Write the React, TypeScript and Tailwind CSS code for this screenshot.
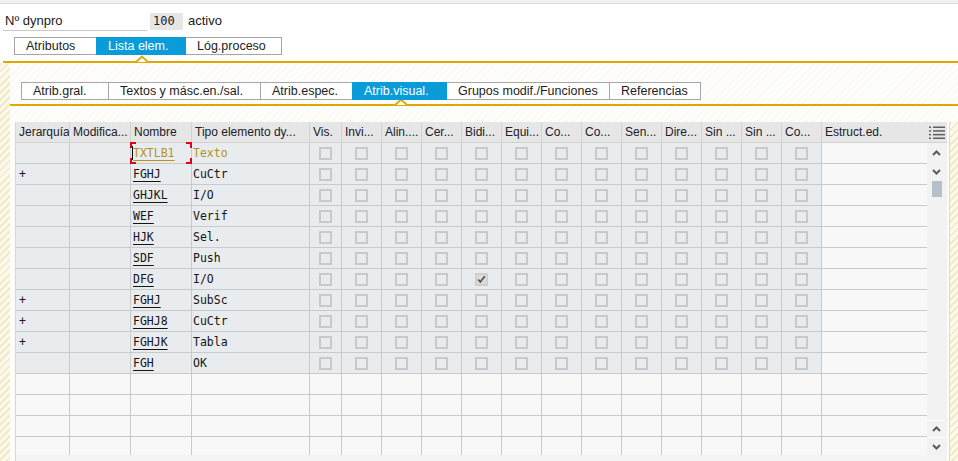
import React from 'react';

const sans = "font-['Liberation_Sans',Arial,sans-serif]";
const mono = "font-['DejaVu_Sans_Mono','Liberation_Mono',monospace]";

const hatchStrong =
  'bg-[repeating-linear-gradient(135deg,#f2eac3_0px,#f2eac3_2px,#fbf9ee_2px,#fbf9ee_5px)]';
const hatchFaint =
  'bg-[repeating-linear-gradient(135deg,#fbfaf4_0px,#fbfaf4_2px,#fefefd_2px,#fefefd_5px)]';

const headers = [
  'Jerarquía',
  'Modifica...',
  'Nombre',
  'Tipo elemento dy...',
  'Vis.',
  'Invi...',
  'Alin....',
  'Cer...',
  'Bidi...',
  'Equi...',
  'Co...',
  'Co...',
  'Sen...',
  'Dire...',
  'Sin ...',
  'Sin ...',
  'Co...',
  'Estruct.ed.',
];

type Row = { plus?: boolean; name: string; type: string; checked?: number };

const rows: Row[] = [
  { name: 'TXTLB1', type: 'Texto' },
  { plus: true, name: 'FGHJ', type: 'CuCtr' },
  { name: 'GHJKL', type: 'I/O' },
  { name: 'WEF', type: 'Verif' },
  { name: 'HJK', type: 'Sel.' },
  { name: 'SDF', type: 'Push' },
  { name: 'DFG', type: 'I/O', checked: 4 },
  { plus: true, name: 'FGHJ', type: 'SubSc' },
  { plus: true, name: 'FGHJ8', type: 'CuCtr' },
  { plus: true, name: 'FGHJK', type: 'Tabla' },
  { name: 'FGH', type: 'OK' },
];

const gridCols =
  'grid grid-cols-[54px_61px_61px_118px_32px_repeat(12,40px)_105px]';

function Caret({ left }: { left: number }) {
  return (
    <svg
      className="absolute top-[-6px]"
      style={{ left: left - 6 }}
      width="12"
      height="8"
      viewBox="0 0 12 8"
    >
      <polyline points="0,7 6,1.5 12,7" fill="#ffffff" stroke="#dfa700" strokeWidth="2" />
    </svg>
  );
}

function Tab({ label, width, active, first }: { label: string; width: number; active?: boolean; first?: boolean }) {
  return (
    <div
      style={{ width }}
      className={`h-[18px] pl-[11px] text-[12.5px] leading-[16px] whitespace-nowrap border ${first ? '' : '-ml-px'} ${
        active
          ? 'bg-[#0a9bd9] border-[#0a9bd9] text-white relative z-10'
          : 'bg-white border-[#a6a6a6] text-[#1c1c1c]'
      }`}
    >
      {label}
    </div>
  );
}

function Checkbox({ checked }: { checked?: boolean }) {
  return (
    <div
      className={`w-[13px] h-[13px] border-2 ${
        checked ? 'border-[#cfcfcf] bg-[#dcdcdc]' : 'border-[#c9c9c9]'
      } flex items-center justify-center`}
    >
      {checked && (
        <svg width="11" height="11" viewBox="0 0 11 11">
          <path d="M1.5 5.5 L4 8.5 L9.5 1.5" fill="none" stroke="#4d4d4d" strokeWidth="2" />
        </svg>
      )}
    </div>
  );
}

function Chevron({ up }: { up?: boolean }) {
  return (
    <svg width="9" height="6" viewBox="0 0 9 6">
      <polyline
        points={up ? '1,5 4.5,1.5 8,5' : '1,1 4.5,4.5 8,1'}
        fill="none"
        stroke="#5c5c5c"
        strokeWidth="2"
      />
    </svg>
  );
}

function FocusCorners() {
  const c = 'absolute bg-[#e2001a]';
  return (
    <>
      <div className={`${c} left-[-1px] top-[-1px] w-[6px] h-[2px]`} />
      <div className={`${c} left-[-1px] top-[-1px] w-[2px] h-[6px]`} />
      <div className={`${c} right-[-1px] top-[-1px] w-[6px] h-[2px]`} />
      <div className={`${c} right-[-1px] top-[-1px] w-[2px] h-[6px]`} />
      <div className={`${c} left-[-1px] bottom-[-1px] w-[6px] h-[2px]`} />
      <div className={`${c} left-[-1px] bottom-[-1px] w-[2px] h-[6px]`} />
      <div className={`${c} right-[-1px] bottom-[-1px] w-[6px] h-[2px]`} />
      <div className={`${c} right-[-1px] bottom-[-1px] w-[2px] h-[6px]`} />
    </>
  );
}

export default function App() {
  const cell = 'h-[21px] border-r border-b border-[#cacaca]';

  return (
    <div className={`w-[958px] h-[461px] overflow-hidden bg-white flex flex-col ${sans}`}>
      {/* top strip */}
      <div className="h-[4px] bg-[#f0f0f0] border-b border-[#dedede]" />

      {/* dynpro line */}
      <div className="mt-[9px] flex items-start h-[18px]">
        <div className="ml-[3px] w-[144px] h-[18px] border-b border-[#c9c9c9] pl-[2px] text-[13px] leading-[16px] text-[#1a1a1a]">
          Nº dynpro
        </div>
        <div className={`ml-[3px] w-[33px] h-[17px] bg-[#e6e6e6] pl-[3px] text-[12px] leading-[17px] text-[#1a1a1a] ${mono}`}>
          100
        </div>
        <div className="ml-[5px] text-[13px] leading-[16px] text-[#1a1a1a]">activo</div>
      </div>

      {/* main tabs */}
      <div className="mt-[6px] ml-[14px] flex">
        <Tab label="Atributos" width={83} first />
        <Tab label="Lista elem." width={90} active />
        <Tab label="Lóg.proceso" width={97} />
      </div>
      <div className="relative mt-[6px] ml-[3px] h-[2px] bg-[#dfa700]">
        <Caret left={139} />
      </div>

      {/* lower area */}
      <div className={`flex-1 flex ${hatchFaint}`}>
        <div className={`w-[10px] ${hatchStrong}`} />
        <div className="flex-1 flex flex-col">
          <div className="mt-[19px] ml-[11px] flex">
            <Tab label="Atrib.gral." width={88} first />
            <Tab label="Textos y másc.en./sal." width={153} />
            <Tab label="Atrib.espec." width={93} />
            <Tab label="Atrib.visual." width={95} active />
            <Tab label="Grupos modif./Funciones" width={164} />
            <Tab label="Referencias" width={92} />
          </div>
          <div className="relative mt-[4px] h-[2px] bg-[#dfa700]">
            <Caret left={391} />
          </div>

          <div className="mt-[16px] flex">
            <div className="w-[5px]" />
            <div className="flex flex-col border-l border-[#d6d6d6]">
              <div className="flex h-[333px] overflow-hidden">
                {/* table */}
                <div className="w-[911px] flex flex-col">
                  <div className={`${gridCols} bg-[#e6e6e6]`}>
                    {headers.map((h, i) => (
                      <div
                        key={i}
                        className={`h-[21px] border-b border-[#d2d2d2] ${
                          i < headers.length - 1 ? 'border-r' : ''
                        } pl-[3px] text-[12px] leading-[20px] text-[#20202a] whitespace-nowrap overflow-hidden`}
                      >
                        {h}
                      </div>
                    ))}
                  </div>

                  {rows.map((r, ri) => {
                    const focused = ri === 0;
                    const textColor = focused ? 'text-[#b5931a]' : 'text-[#141414]';
                    return (
                      <div key={ri} className={gridCols}>
                        <div className={`${cell} bg-[#e9ecef] pl-[3px] text-[11.5px] leading-[20px] text-[#2a0a2a] ${mono}`}>
                          {r.plus ? '+' : ''}
                        </div>
                        <div className={`${cell} bg-[#e9ecef]`} />
                        <div className={`${cell} bg-[#e9ecef] relative pl-[1px] flex items-center`}>
                          {focused && <div className="w-px h-[14px] bg-black" />}
                          <span
                            className={`${focused ? '' : 'pl-px'} text-[11.5px] leading-[20px] underline decoration-1 underline-offset-[3px] ${textColor} ${mono}`}
                          >
                            {r.name}
                          </span>
                          {focused && <FocusCorners />}
                        </div>
                        <div className={`${cell} bg-[#e9ecef] pl-[1px] text-[11.5px] leading-[20px] ${textColor} ${mono}`}>
                          {r.type}
                        </div>
                        {Array.from({ length: 13 }).map((_, ci) => (
                          <div key={ci} className={`${cell} bg-[#e9ecef] flex items-center justify-center`}>
                            <Checkbox checked={r.checked === ci} />
                          </div>
                        ))}
                        <div className="h-[21px] border-b border-[#cacaca] bg-[#f8f8f8]" />
                      </div>
                    );
                  })}

                  {Array.from({ length: 4 }).map((_, ri) => (
                    <div key={ri} className={gridCols}>
                      {Array.from({ length: 18 }).map((_, ci) => (
                        <div
                          key={ci}
                          className={`h-[21px] border-b border-[#cacaca] bg-[#f8f8f8] ${ci < 17 ? 'border-r' : ''}`}
                        />
                      ))}
                    </div>
                  ))}
                </div>

                {/* vertical scrollbar column */}
                <div className="w-[20px] flex flex-col bg-[#f2f2f2]">
                  <div className="h-[21px] bg-[#e6e6e6] border-b border-[#d2d2d2] flex items-center justify-center">
                    <svg width="16" height="13" viewBox="0 0 16 13">
                      {[0.5, 4.2, 7.9, 11.5].map((y) => (
                        <g key={y} fill="#5e5e5e">
                          <rect x="0" y={y} width="2" height="1.5" />
                          <rect x="4" y={y} width="12" height="1.5" />
                        </g>
                      ))}
                    </svg>
                  </div>
                  <div className="h-[19px] flex items-center justify-center pr-[2px]">
                    <Chevron up />
                  </div>
                  <div className="h-[19px] flex items-center justify-center pr-[2px]">
                    <Chevron />
                  </div>
                  <div className="ml-[5px] w-[10px] h-[16px] bg-[#b6c0ca]" />
                  <div className="flex-1" />
                  <div className="h-[17px] mr-[2px] bg-[#f2f2f2] border-t border-white flex items-center justify-center">
                    <Chevron up />
                  </div>
                  <div className="h-[18px] mr-[2px] bg-[#f2f2f2] border-t border-white flex items-center justify-center">
                    <Chevron />
                  </div>
                </div>
              </div>
              <div className="h-[6px] bg-[#f3f3f3]" />
            </div>
            <div className="w-[2px]" />
            <div className="border-l border-[#dadada]" />
            <div className={`flex-1 ${hatchStrong}`} />
          </div>
        </div>
      </div>
    </div>
  );
}
